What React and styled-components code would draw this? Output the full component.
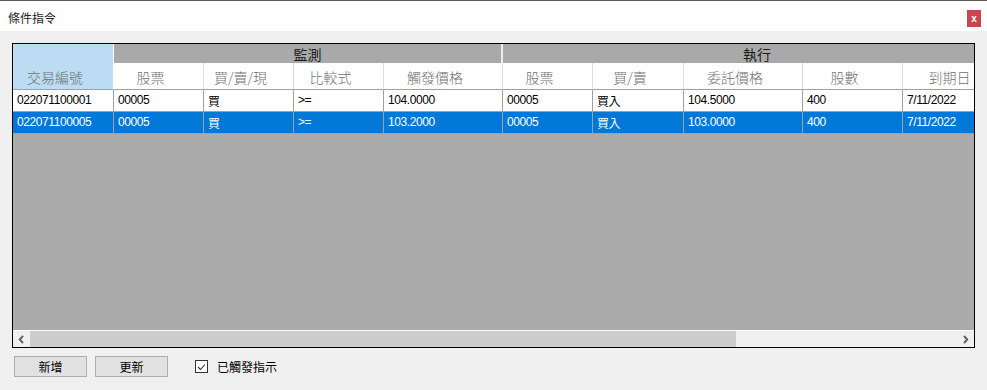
import React from 'react';
import styled, { createGlobalStyle } from 'styled-components';

const Global = createGlobalStyle`
  html, body {
    margin: 0;
    padding: 0;
    background: #f0f0f0;
  }
  body {
    font-family: "Liberation Sans", "Noto Sans CJK TC", sans-serif;
  }
`;

const Window = styled.div`
  width: 987px;
  height: 390px;
  display: flex;
  flex-direction: column;
  background: #f0f0f0;
  overflow: hidden;
`;

const TitleBar = styled.div`
  height: 30px;
  border-top: 1px solid #5a5a5a;
  background: #ffffff;
  display: flex;
  align-items: center;
  justify-content: space-between;
  padding: 0 6px 0 8px;
`;

const Title = styled.span`
  font-family: "Noto Sans CJK TC", sans-serif;
  font-size: 12px;
  color: #222;
  padding-top: 2px;
`;

const Close = styled.div`
  width: 14px;
  height: 17px;
  margin-top: 4px;
  background: #c9474b;
  color: #fff;
  font-family: "Liberation Sans", sans-serif;
  font-weight: bold;
  font-size: 10px;
  display: flex;
  align-items: center;
  justify-content: center;
`;

const Body = styled.div`
  flex: 1;
  padding: 12px 12px 0 12px;
  display: flex;
  flex-direction: column;
`;

const GridFrame = styled.div`
  width: 963px;
  height: 305px;
  box-sizing: border-box;
  border: 1px solid #000;
  background: #ababab;
  display: flex;
  flex-direction: column;
  overflow: hidden;
`;

const Viewport = styled.div`
  flex: 1;
  overflow: hidden;
`;

const Sheet = styled.div`
  width: 1000px;
  display: grid;
  grid-template-columns: 101px 90px 90px 90px 119px 90px 91px 119px 100px 110px;
  grid-template-rows: 19px 27px;
  grid-auto-rows: 22px;
`;

const IdHeader = styled.div`
  grid-row: 1 / span 2;
  background: #bcdcf4;
  border-right: 1px solid #fff;
  border-bottom: 1px solid #a0a0a0;
  box-sizing: border-box;
  display: flex;
  align-items: flex-end;
  justify-content: center;
  padding: 0 16px 2px 0;
  font-family: "Noto Sans CJK TC", sans-serif;
  font-weight: 300;
  font-size: 14px;
  color: #707070;
`;

const GroupHeader = styled.div`
  grid-column: span ${(p) => p.$span};
  background: #a9a9a9;
  border-right: 2px solid #ececec;
  box-sizing: border-box;
  display: flex;
  align-items: center;
  justify-content: center;
  padding-top: 1px;
  font-family: "Noto Sans CJK TC", sans-serif;
  font-size: 14px;
  color: #1a1a1a;
`;

const ColHeader = styled.div`
  background: #fff;
  border-right: 1px solid #dcdcdc;
  border-bottom: 1px solid #a0a0a0;
  box-sizing: border-box;
  display: flex;
  align-items: flex-end;
  justify-content: center;
  padding: 0 16px 2px 0;
  font-family: "Noto Sans CJK TC", sans-serif;
  font-weight: 300;
  font-size: 14px;
  color: #707070;
  white-space: nowrap;
`;

const Cell = styled.div`
  background: ${(p) => (p.$selected ? '#0078d7' : '#fff')};
  color: ${(p) => (p.$selected ? '#fff' : '#000')};
  border-right: 1px solid #a0a0a0;
  border-bottom: 1px solid #a0a0a0;
  box-sizing: border-box;
  display: flex;
  align-items: center;
  padding: 0 3px 1px 4px;
  font-family: "Liberation Sans", "Noto Sans CJK TC", sans-serif;
  font-size: 12px;
  letter-spacing: -0.4px;
  white-space: nowrap;
`;

const HScroll = styled.div`
  height: 16px;
  border-top: 1px solid #fff;
  background: #f0f0f0;
  display: flex;
  align-items: stretch;
`;

const Arrow = styled.div`
  width: 17px;
  display: flex;
  align-items: center;
  justify-content: center;
`;

const Track = styled.div`
  flex: 1;
  display: flex;
`;

const Thumb = styled.div`
  width: 706px;
  background: #cdcdcd;
`;

const Footer = styled.div`
  display: flex;
  align-items: center;
  padding: 8px 0 0 2px;
`;

const Button = styled.button`
  width: 73px;
  height: 21px;
  margin-right: 8px;
  border: 1px solid #adadad;
  background: #e1e1e1;
  font-family: "Noto Sans CJK TC", sans-serif;
  font-size: 12px;
  color: #000;
  padding: 0;
`;

const Check = styled.label`
  display: flex;
  align-items: center;
  gap: 9px;
  margin-left: 19px;
  font-family: "Noto Sans CJK TC", sans-serif;
  font-size: 12px;
  color: #000;
`;

const Box = styled.span`
  width: 11px;
  height: 11px;
  border: 1px solid #333;
  background: #fff;
  display: flex;
  align-items: center;
  justify-content: center;
`;

const headers = ['股票', '買/賣/現', '比較式', '觸發價格', '股票', '買/賣', '委託價格', '股數', '到期日'];

const rows = [
  ['022071100001', '00005', '買', '>=', '104.0000', '00005', '買入', '104.5000', '400', '7/11/2022'],
  ['022071100005', '00005', '買', '>=', '103.2000', '00005', '買入', '103.0000', '400', '7/11/2022'],
];

export default function App() {
  return (
    <Window>
      <Global />
      <TitleBar>
        <Title>條件指令</Title>
        <Close>x</Close>
      </TitleBar>
      <Body>
        <GridFrame>
          <Viewport>
            <Sheet>
              <IdHeader>交易編號</IdHeader>
              <GroupHeader $span={4}>監測</GroupHeader>
              <GroupHeader $span={5}>執行</GroupHeader>
              {headers.map((h, i) => (
                <ColHeader key={i}>{h}</ColHeader>
              ))}
              {rows.map((r, ri) =>
                r.map((c, ci) => (
                  <Cell key={ri + '-' + ci} $selected={ri === 1}>
                    {c}
                  </Cell>
                ))
              )}
            </Sheet>
          </Viewport>
          <HScroll>
            <Arrow>
              <svg width="7" height="9" viewBox="0 0 7 9">
                <path d="M5 0.8 L1.8 4.5 L5 8.2" fill="none" stroke="#606060" strokeWidth="2" />
              </svg>
            </Arrow>
            <Track>
              <Thumb />
            </Track>
            <Arrow>
              <svg width="7" height="9" viewBox="0 0 7 9">
                <path d="M2 0.8 L5.2 4.5 L2 8.2" fill="none" stroke="#606060" strokeWidth="2" />
              </svg>
            </Arrow>
          </HScroll>
        </GridFrame>
        <Footer>
          <Button>新增</Button>
          <Button>更新</Button>
          <Check>
            <Box>
              <svg width="9" height="8" viewBox="0 0 9 8">
                <path d="M1 4 L3.5 6.5 L8 1.5" fill="none" stroke="#333" strokeWidth="1.1" />
              </svg>
            </Box>
            已觸發指示
          </Check>
        </Footer>
      </Body>
    </Window>
  );
}
